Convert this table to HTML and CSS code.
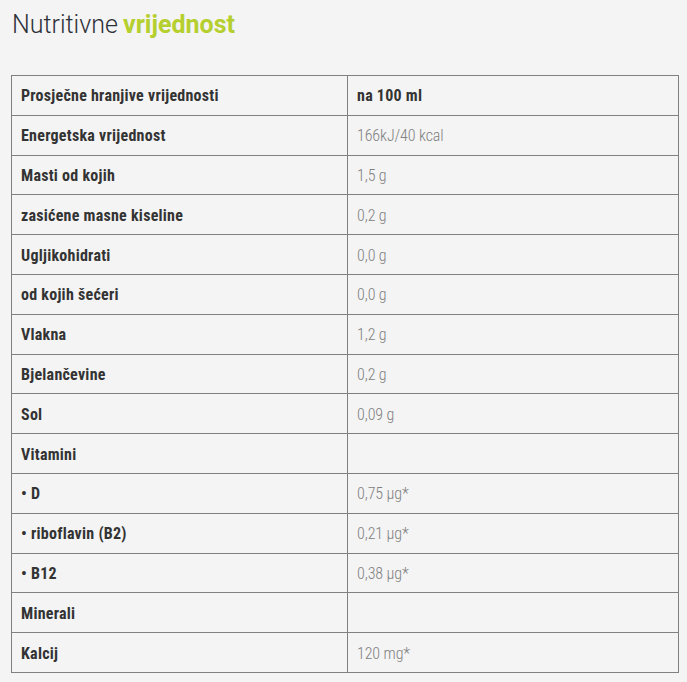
FILE: index.html
```html
<!DOCTYPE html>
<html lang="hr">
<head>
<meta charset="utf-8">
<link rel="stylesheet" href="styles.css">
</head>
<body>
<section class="nutrition">
  <h2 class="title">Nutritivne <strong class="accent">vrijednost</strong></h2>
  <table class="ntable">
    <tr class="head"><td>Prosječne hranjive vrijednosti</td><td>na 100 ml</td></tr>
    <tr><td>Energetska vrijednost</td><td>166kJ/40 kcal</td></tr>
    <tr><td>Masti od kojih</td><td>1,5 g</td></tr>
    <tr><td>zasićene masne kiseline</td><td>0,2 g</td></tr>
    <tr><td>Ugljikohidrati</td><td>0,0 g</td></tr>
    <tr><td>od kojih šećeri</td><td>0,0 g</td></tr>
    <tr><td>Vlakna</td><td>1,2 g</td></tr>
    <tr><td>Bjelančevine</td><td>0,2 g</td></tr>
    <tr><td>Sol</td><td>0,09 g</td></tr>
    <tr><td>Vitamini</td><td></td></tr>
    <tr><td>• D</td><td>0,75 µg*</td></tr>
    <tr><td>• riboflavin (B2)</td><td>0,21 µg*</td></tr>
    <tr><td>• B12</td><td>0,38 µg*</td></tr>
    <tr><td>Minerali</td><td></td></tr>
    <tr><td>Kalcij</td><td>120 mg*</td></tr>
  </table>
</section>
</body>
</html>
```
FILE: styles.css
```css
html, body {
  margin: 0;
  background: #f4f4f4;
}
body {
  padding: 10px 9px 0 11px;
  font-family: Roboto, "Open Sans", sans-serif;
}
.title {
  margin: 0 0 36px 1px;
  font-size: 25px;
  line-height: 29px;
  font-weight: 300;
  font-stretch: 92%;
  color: #2c3038;
  word-spacing: -1px;
}
.accent {
  font-weight: 700;
  font-stretch: 90%;
  color: #b5cf2f;
}
.ntable {
  width: 668px;
  border-collapse: collapse;
  table-layout: fixed;
}
.ntable td {
  border: 1px solid #808080;
  height: 37.8px;
  padding: 1px 9px 0;
  box-sizing: content-box;
  vertical-align: middle;
  font-size: 16px;
  font-stretch: 75%;
  line-height: 19px;
  white-space: nowrap;
}
.ntable td:first-child {
  width: 317px;
  font-weight: 700;
  letter-spacing: 0.25px;
  color: #333;
}
.ntable td:last-child {
  font-weight: 300;
  letter-spacing: -0.1px;
  color: #808080;
}
.ntable .head td:last-child {
  font-weight: 700;
  letter-spacing: 0.25px;
  color: #333;
}
```
